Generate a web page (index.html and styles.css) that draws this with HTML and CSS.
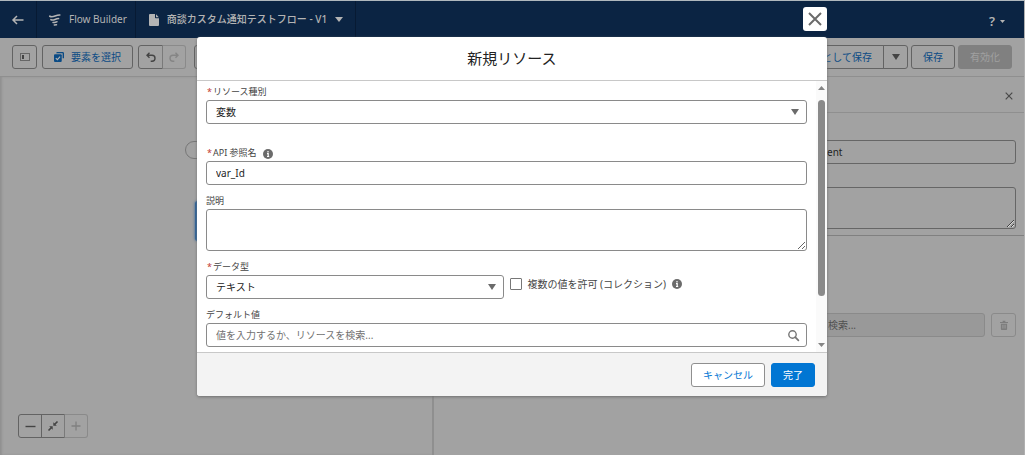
FILE: index.html
```html
<!DOCTYPE html>
<html lang="ja">
<head>
<meta charset="utf-8">
<meta name="viewport" content="width=device-width, initial-scale=1">
<title>Flow Builder</title>
<link rel="stylesheet" href="styles.css">
</head>
<body>
<div class="app">
  <header class="topbar">
    <button class="topbar-item back" aria-label="戻る">
      <svg width="12" height="10" viewBox="0 0 12 10"><path d="M11.500 5H1.500M5 1L1 5l4 4" fill="none" stroke="currentColor" stroke-width="1.500"/></svg>
    </button>
    <div class="topbar-item brand">
      <svg width="12" height="12" viewBox="0 0 12 12" fill="none" stroke="currentColor" stroke-linecap="round"><path d="M.8 2.200C4 4.200 6.500.8 10.800 1" stroke-width="1.700"/><path d="M2 5.700c3 1.300 4-1.200 7.500-1.200" stroke-width="1.700"/><path d="M4 8.500c1.500.5 2.500-.6 4-.7M5.300 11l2.200-.2" stroke-width="1.500"/></svg>
      <span>Flow Builder</span>
    </div>
    <button class="topbar-item flow-name">
      <svg width="10" height="12" viewBox="0 0 10 12"><path d="M1 0h5v3.500q0 .7.700.7H10V11q0 1-1 1H1q-1 0-1-1V1q0-1 1-1zM7 .3L9.800 3.200H7z" fill="currentColor"/></svg>
      <span>商談カスタム通知テストフロー - V1</span>
      <svg width="8" height="5" viewBox="0 0 8 5"><path d="M0 0h8L4 5z" fill="currentColor"/></svg>
    </button>
    <button class="help" aria-label="ヘルプ"><span class="help-mark">?</span><svg width="5" height="3" viewBox="0 0 5 3"><path d="M0 0h5L2.500 3z" fill="currentColor"/></svg></button>
  </header>

  <div class="toolbar">
    <button class="btn icon-btn" aria-label="ツールボックスを切り替え"><svg width="10" height="8" viewBox="0 0 10 8"><rect x=".5" y=".5" width="9" height="7" fill="none" stroke="#666"/><path d="M2 2h2v4H2z" fill="#444"/></svg></button>
    <button class="btn select-btn">
      <svg width="10" height="10" viewBox="0 0 11 11"><path d="M3.500 0H9.500Q11 0 11 1.500V7H9.500V1.500H2.500Q2.500 0 3.500 0z" fill="#0b4b85"/><rect y="2.500" width="8.500" height="8.500" rx="1.200" fill="#0b4b85"/><path d="M2 6.700l1.700 1.700 3-3.400" fill="none" stroke="#b5b5b5" stroke-width="1.200"/></svg>
      <span>要素を選択</span>
    </button>
    <div class="btn-group">
      <button class="btn icon-btn" aria-label="元に戻す"><svg width="10" height="10" viewBox="0 0 10 10"><path d="M3.500.7L1 3.200l2.500 2.500M1.200 3.200H6a3 3 0 0 1 0 6H4.700" fill="none" stroke="#444" stroke-width="1.400"/></svg></button>
      <button class="btn icon-btn faded" aria-label="やり直す" disabled><svg width="10" height="10" viewBox="0 0 10 10"><path d="M6.500.7L9 3.200 6.500 5.700M8.800 3.200H4a3 3 0 0 0 0 6h1.300" fill="none" stroke="#858585" stroke-width="1.400"/></svg></button>
    </div>
    <button class="btn icon-btn after-history" aria-label="切り取り"></button>
    <div class="toolbar-end">
      <div class="btn-group">
        <button class="btn save-as">として保存</button>
        <button class="btn icon-btn" aria-label="その他の保存"><svg width="8" height="6" viewBox="0 0 8 6"><path d="M0 0h8L4 6z" fill="#444"/></svg></button>
      </div>
      <button class="btn">保存</button>
      <button class="btn activate" disabled>有効化</button>
    </div>
  </div>

  <main class="workspace">
    <section class="canvas" aria-label="キャンバス">
      <div class="start-pill"></div>
      <div class="node"></div>
      <div class="btn-group zoom">
        <button class="btn icon-btn" aria-label="縮小"><svg width="11" height="11" viewBox="0 0 11 11"><path d="M.5 5.500h10" stroke="#444" stroke-width="1.400"/></svg></button>
        <button class="btn icon-btn" aria-label="全体表示"><svg width="10" height="10" viewBox="0 0 10 10"><path d="M5.300 1.200v3.500h3.500zM4.700 8.800V5.300H1.200z" fill="#444"/><path d="M6.500 3.500L9.500.5M3.500 6.500l-3 3" stroke="#444" stroke-width="1.600"/></svg></button>
        <button class="btn icon-btn faded" aria-label="拡大" disabled><svg width="10" height="10" viewBox="0 0 10 10"><path d="M.5 5h9M5 .5v9" stroke="#808080" stroke-width="1.300"/></svg></button>
      </div>
    </section>
    <aside class="panel">
      <div class="panel-head">
        <button class="plain" aria-label="パネルを閉じる"><svg width="8" height="8" viewBox="0 0 8 8"><path d="M.7.7l6.600 6.600M7.300.7L.7 7.300" stroke="#494949" stroke-width="1.200"/></svg></button>
      </div>
      <div class="panel-fields">
        <input class="field dim" type="text" value="ent" aria-label="API 参照名">
        <textarea class="field dim area" aria-label="要素の説明"></textarea>
      </div>
      <div class="panel-search">
        <input class="field dim off" type="text" placeholder="検索..." aria-label="リソース" disabled>
        <button class="btn icon-btn faded trash" aria-label="削除" disabled><svg width="8" height="10" viewBox="0 0 9 11"><path d="M0 2h9v1.200H0zM3 2V.6h3V2M1 4h7v6q0 1-1 1H2q-1 0-1-1z" fill="#7d7d7d"/><path d="M3.300 5.300v4.200M5.700 5.300v4.200" stroke="#a0a0a0"/></svg></button>
      </div>
    </aside>
  </main>
</div>

<div class="overlay">
  <section class="modal" role="dialog" aria-modal="true" aria-labelledby="dialog-title">
    <button class="modal-close" aria-label="閉じる"><svg width="14" height="14" viewBox="0 0 14 14"><path d="M1 1l12 12M13 1L1 13" stroke="#6b6b6b" stroke-width="2"/></svg></button>
    <header class="modal-head"><h1 id="dialog-title">新規リソース</h1></header>
    <div class="modal-body">
      <form class="form" id="resource">
        <div class="group">
          <label for="kind"><b class="req">*</b>リソース種別</label>
          <div class="control">
            <select class="field" id="kind"><option>変数</option></select>
            <svg class="mark" width="8" height="6" viewBox="0 0 8 6"><path d="M0 0h8L4 6z" fill="#6b6b6b"/></svg>
          </div>
        </div>
        <div class="group spaced">
          <div class="label-line">
            <label for="api"><b class="req">*</b>API 参照名</label>
            <svg width="10" height="10" viewBox="0 0 10 10"><circle cx="5" cy="5" r="5" fill="#6b6b6b"/><path d="M5 2v1.400M4 4.700h1.200v2.600M4 7.500h2.200" fill="none" stroke="#fff" stroke-width="1.200"/></svg>
          </div>
          <input class="field" id="api" type="text" value="var_Id">
        </div>
        <div class="group">
          <label for="desc">説明</label>
          <textarea class="field area" id="desc"></textarea>
        </div>
        <div class="type-row">
          <div class="group">
            <label for="type"><b class="req">*</b>データ型</label>
            <div class="control">
              <select class="field" id="type"><option>テキスト</option></select>
              <svg class="mark" width="8" height="6" viewBox="0 0 8 6"><path d="M0 0h8L4 6z" fill="#6b6b6b"/></svg>
            </div>
          </div>
          <div class="check">
            <input type="checkbox" id="multi">
            <label for="multi">複数の値を許可 (コレクション)</label>
            <svg width="10" height="10" viewBox="0 0 10 10"><circle cx="5" cy="5" r="5" fill="#6b6b6b"/><path d="M5 2v1.400M4 4.700h1.200v2.600M4 7.500h2.200" fill="none" stroke="#fff" stroke-width="1.200"/></svg>
          </div>
        </div>
        <div class="group">
          <label for="default">デフォルト値</label>
          <div class="control">
            <input class="field" id="default" type="text" placeholder="値を入力するか、リソースを検索...">
            <svg class="mark" width="11" height="11" viewBox="0 0 11 11"><circle cx="4.500" cy="4.500" r="3.700" fill="none" stroke="#757575" stroke-width="1.400"/><path d="M7.200 7.200l3.200 3.200" stroke="#757575" stroke-width="1.700" stroke-linecap="round"/></svg>
          </div>
        </div>
      </form>
      <div class="scroller" aria-hidden="true">
        <svg width="7" height="4" viewBox="0 0 7 4"><path d="M0 4h7L3.500 0z" fill="#858585"/></svg>
        <div class="track"><div class="thumb"></div></div>
        <svg width="7" height="4" viewBox="0 0 7 4"><path d="M0 0h7L3.500 4z" fill="#858585"/></svg>
      </div>
    </div>
    <footer class="modal-foot">
      <button class="action">キャンセル</button>
      <button class="action primary" form="resource" type="button">完了</button>
    </footer>
  </section>
</div>
</body>
</html>
```
FILE: styles.css
```css
* { box-sizing: border-box; }

body {
  margin: 0;
  background: #a2a2a2;
  color: #222;
  font: 10px/15px "Noto Sans", "Noto Sans CJK JP", sans-serif;
}

button, input, select, textarea { font: inherit; margin: 0; }
button { padding: 0; }
svg { display: block; flex: none; overflow: visible; }

.app {
  display: flex;
  flex-direction: column;
  min-height: 100vh;
  border-top: 1px solid #b0b8bd;
  border-right: 1px solid #b0b0b0;
}

/* Top bar */
.topbar {
  display: flex;
  height: 37px;
  background: #0b2443;
  color: #b4b4b4;
}
.topbar-item {
  display: flex;
  align-items: center;
  border: 0;
  border-right: 1px solid #071a33;
  background: none;
  color: inherit;
}
.back { width: 37px; padding-left: 12px; }
.brand { gap: 8px; padding: 0 8px 0 12px; }
.flow-name { gap: 8px; padding: 0 12px 0 13px; font-weight: 500; }
.help {
  display: flex;
  align-items: center;
  gap: 5px;
  margin-left: auto;
  padding: 3px 19px 0 0;
  border: 0;
  background: none;
  color: inherit;
}
.help-mark { font-size: 13px; font-weight: 600; }

/* Buttons */
.btn {
  display: flex;
  align-items: center;
  justify-content: center;
  height: 24px;
  padding: 0 11px;
  border: 1px solid #636363;
  border-radius: 3px;
  background: transparent;
  color: #0b4b85;
  white-space: nowrap;
}
.icon-btn { width: 25px; padding: 0; }
.faded { border-color: #8a8a8a; }
.btn-group { display: flex; }
.btn-group .btn:not(:last-child) { border-top-right-radius: 0; border-bottom-right-radius: 0; }
.btn-group .btn + .btn { margin-left: -1px; border-top-left-radius: 0; border-bottom-left-radius: 0; }
.btn-group .btn + .faded { width: 24px; border-left-color: #7a7a7a; }

.toolbar {
  display: flex;
  align-items: center;
  gap: 5px;
  height: 39px;
  padding: 0 12px;
  border-bottom: 1px solid #8f8f8f;
}
.select-btn { gap: 7px; }
.after-history { margin-left: 3px; }
.toolbar-end { display: flex; gap: 3px; margin-left: auto; }
.activate { border-color: #808080; background: #808080; color: #a0a0a0; }

/* Workspace */
.workspace { display: flex; flex: 1; }
.canvas {
  position: relative;
  flex: 0 0 434px;
  border-right: 2px solid #8f8f8f;
  box-shadow: inset 2px 0 2px #919191;
}
.start-pill {
  position: absolute;
  left: 185px;
  top: 64px;
  width: 60px;
  height: 18px;
  border: 1px solid #777;
  border-radius: 9px;
}
.node {
  position: absolute;
  left: 195px;
  top: 124px;
  width: 100px;
  height: 40px;
  border-radius: 3px;
  background: #2b629b;
  box-shadow: 0 0 3px #2b629b;
}
.zoom { position: absolute; left: 18px; bottom: 17px; }
.zoom .icon-btn { width: 24px; }

.panel { flex: 1; }
.panel-head {
  display: flex;
  align-items: center;
  justify-content: flex-end;
  height: 36px;
  padding: 2px 11px 0 0;
  border-bottom: 1px solid #8f8f8f;
}
.plain { border: 0; background: none; }
.panel-fields {
  display: flex;
  flex-direction: column;
  align-items: flex-end;
  gap: 23px;
  padding: 27px 8px 6px;
  border-bottom: 1px solid #808080;
}
.panel-fields .field { width: 200px; }
.panel-search {
  display: flex;
  justify-content: flex-end;
  gap: 6px;
  padding: 77px 8px 0;
}
.panel-search .field { width: 168px; }

/* Fields */
.field {
  display: block;
  width: 100%;
  height: 24px;
  padding: 0 9px;
  border: 1px solid #8a8a8a;
  border-radius: 3px;
  background: #fff;
  color: #222;
  appearance: none;
}
.field::placeholder { color: #717171; opacity: 1; }
.area { height: 42px; resize: vertical; }
.dim { padding-left: 10px; border-color: #666; background: transparent; }
.off { border-color: #8a8a8a; background: #999; }
.off::placeholder { color: #505050; }

/* Modal */
.overlay {
  position: absolute;
  inset: 0;
  padding: 37px 198px 59px 197px;
}
.modal {
  position: relative;
  border-radius: 3px;
  background: #fff;
  box-shadow: 0 1px 3px #707070;
}
.modal-close {
  position: absolute;
  right: 0;
  top: -30px;
  display: grid;
  place-items: center;
  width: 24px;
  height: 24px;
  border: 0;
  border-radius: 3px;
  background: #fff;
}
.modal-head {
  padding: 11px 12px;
  border-bottom: 1px solid #c8c8c8;
}
.modal-head h1 {
  margin: 0;
  font-size: 15px;
  font-weight: 400;
  line-height: 21px;
  text-align: center;
}
.modal-body { display: flex; }
.form {
  display: flex;
  flex: 1;
  flex-direction: column;
  gap: 9px;
  padding: 4px 9px 5px;
}
.group { flex: 1; }
.group label {
  display: block;
  padding-bottom: 1px;
  font-size: 9px;
  line-height: 14px;
  color: #444;
}
.spaced { margin-top: 13px; }
.req { margin: 0 1px; color: #c23934; font-weight: 400; }
.label-line { display: flex; align-items: center; gap: 6px; }
.control { position: relative; }
.mark {
  position: absolute;
  right: 8px;
  top: 0;
  bottom: 0;
  margin: auto;
  pointer-events: none;
}
.type-row {
  display: grid;
  grid-template-columns: 1fr 1fr;
  gap: 6px;
}
.check {
  display: flex;
  align-items: center;
  gap: 6px;
  padding-top: 9px;
  color: #444;
}
.check input {
  width: 12px;
  height: 12px;
  border: 1px solid #777;
  border-radius: 1px;
  background: #fff;
  appearance: none;
}
.scroller {
  display: flex;
  flex-direction: column;
  align-items: center;
  gap: 10px;
  width: 11px;
  padding: 5px 0;
  background: #fafafa;
}
.track { display: flex; flex: 1; width: 7px; padding-bottom: 37px; }
.thumb { flex: 1; border-radius: 4px; background: #8a8a8a; }

.modal-foot {
  display: flex;
  justify-content: flex-end;
  gap: 6px;
  padding: 10px 12px 9px;
  border-top: 1px solid #c8c8c8;
  border-radius: 0 0 3px 3px;
  background: #f3f3f3;
}
.action {
  height: 24px;
  padding: 0 11px;
  border: 1px solid #8f8f8f;
  border-radius: 3px;
  background: #fff;
  color: #0176d3;
}
.primary { border-color: #0176d3; background: #0176d3; color: #fff; }
```
